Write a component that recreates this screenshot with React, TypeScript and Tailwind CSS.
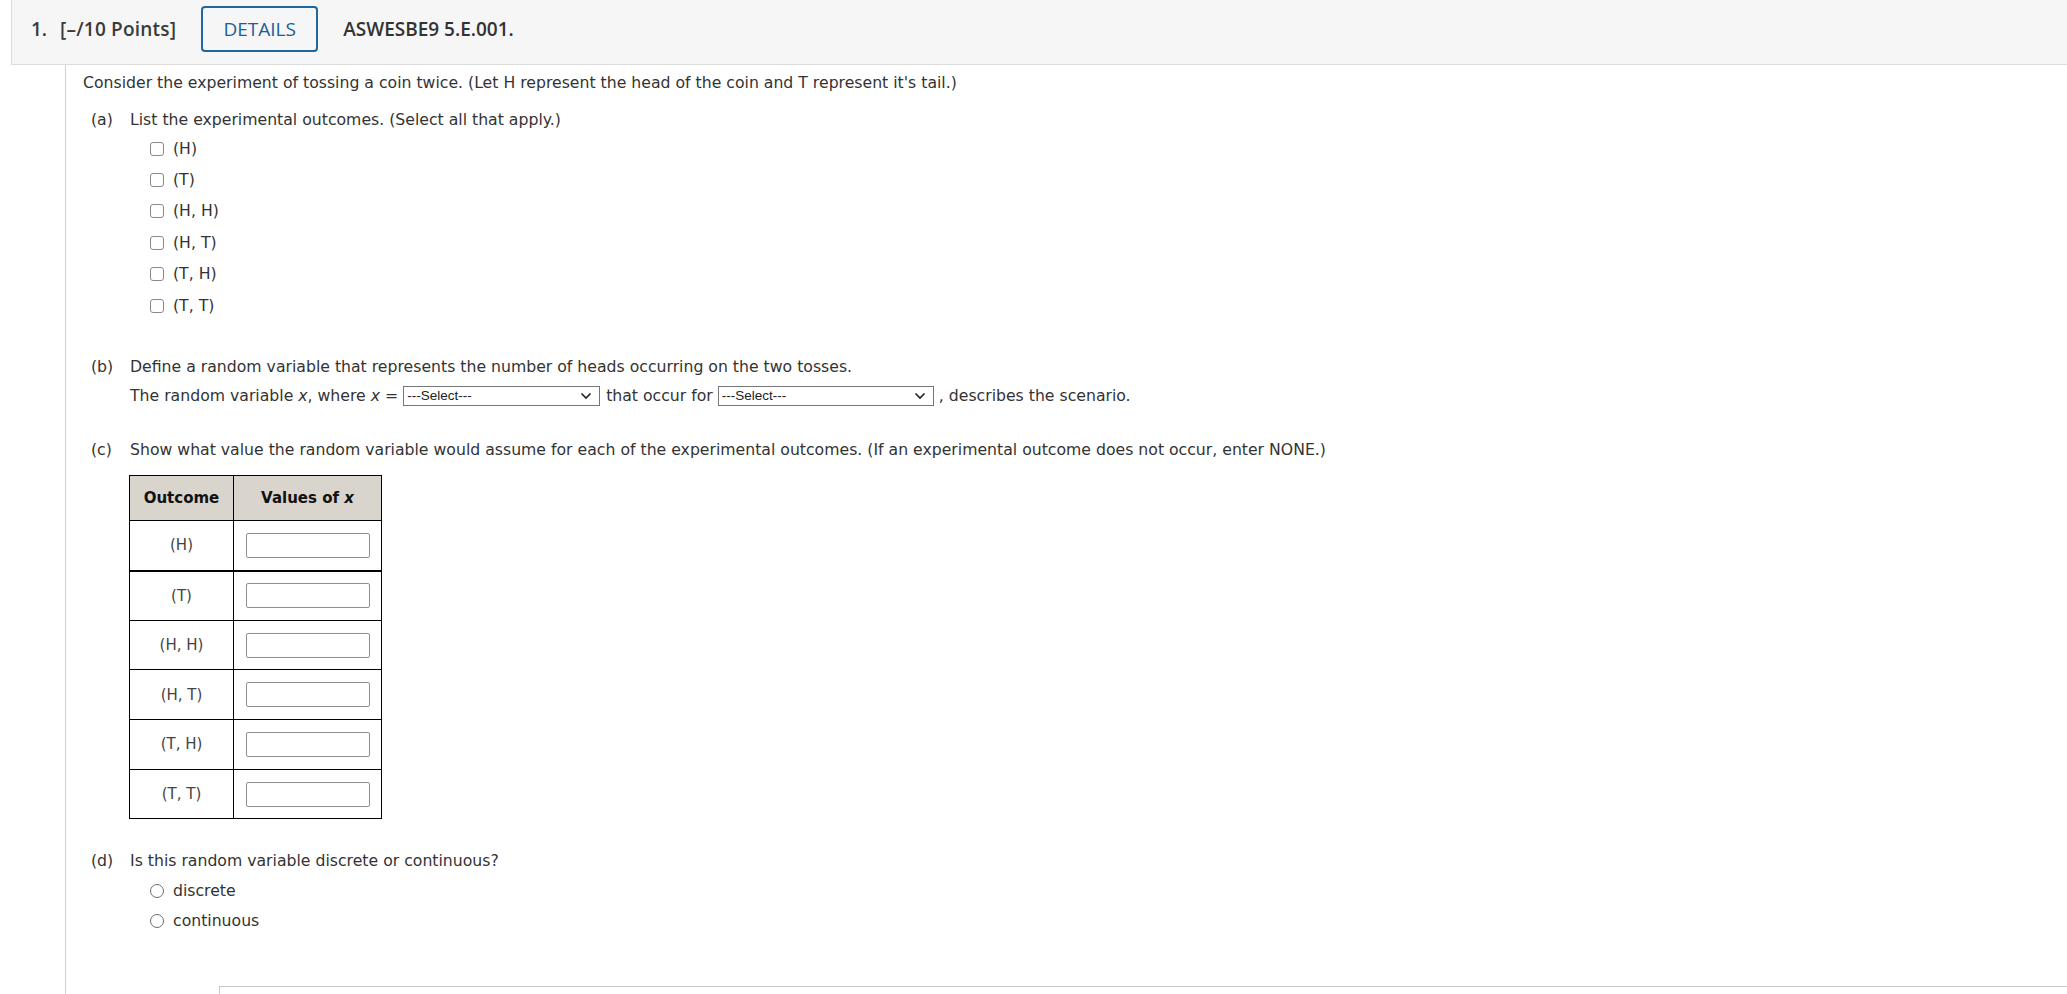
const outcomes = ['(H)', '(T)', '(H, H)', '(H, T)', '(T, H)', '(T, T)']

function Chevron() {
  return (
    <svg width="12" height="8" viewBox="0 0 12 8" className="shrink-0">
      <path d="M1.5 1.5 L6 6 L10.5 1.5" fill="none" stroke="#222" strokeWidth="1.6" />
    </svg>
  )
}

function SelectBox({ className }: { className: string }) {
  return (
    <div
      className={`flex h-[20px] items-center justify-between border border-[#767676] bg-white pl-[3px] pr-[7px] font-['Liberation_Sans',sans-serif] text-[13.5px] text-[#222] ${className}`}
    >
      <span>---Select---</span>
      <Chevron />
    </div>
  )
}

function PartLabel({ tag, children }: { tag: string; children: React.ReactNode }) {
  return (
    <div className="flex h-[20px] items-center pl-[8px]">
      <span className="w-[39px]">{tag}</span>
      <span>{children}</span>
    </div>
  )
}

export default function App() {
  return (
    <div className="min-h-screen bg-white font-['DejaVu_Sans',sans-serif] text-[15.7px] leading-[20px] text-[#333]">
      <div className="ml-[11px] flex h-[65px] items-start border-b border-l border-[#dcdcdc] bg-[#f6f6f6] pl-[19px] pt-[6px] font-['Open_Sans',sans-serif]">
        <div className="flex h-[46px] items-center text-[19px] font-semibold text-[#3a3a3a]">
          <span>1.</span>
          <span className="ml-[13px] tracking-[0.2px]">[–/10 Points]</span>
        </div>
        <div className="ml-[25px] flex h-[46px] w-[117px] items-center justify-center rounded-[4px] border-2 border-[#1f67a0] text-[19px] text-[#18609a]">
          DETAILS
        </div>
        <div className="ml-[25px] flex h-[46px] items-center text-[19px] font-semibold text-[#333]">ASWESBE9 5.E.001.</div>
      </div>

      <div className="ml-[65px] min-h-[929px] border-l border-[#d0d0d0] pl-[17px] pt-[8px]">
        <p className="h-[20px]">
          Consider the experiment of tossing a coin twice. (Let H represent the head of the coin and T represent it's tail.)
        </p>

        <div className="mt-[17px]">
          <PartLabel tag="(a)">List the experimental outcomes. (Select all that apply.)</PartLabel>
          <div className="mt-[3px] pl-[67px]">
            {outcomes.map((o) => (
              <div key={o} className="flex h-[31.4px] items-center">
                <span className="h-[14px] w-[14px] rounded-[3px] border-[1.5px] border-[#8a8a8a] bg-white" />
                <span className="ml-[9px]">{o}</span>
              </div>
            ))}
          </div>
        </div>

        <div className="mt-[36px]">
          <PartLabel tag="(b)">Define a random variable that represents the number of heads occurring on the two tosses.</PartLabel>
          <div className="mt-[9px] flex h-[20px] items-center pl-[47px]">
            <span>
              The random variable <i>x</i>, where <i>x</i> =
            </span>
            <SelectBox className="ml-[5px] w-[197px]" />
            <span className="ml-[6px]">that occur for</span>
            <SelectBox className="ml-[5px] w-[216px]" />
            <span className="ml-[5px]">, describes the scenario.</span>
          </div>
        </div>

        <div className="mt-[34px]">
          <PartLabel tag="(c)">
            Show what value the random variable would assume for each of the experimental outcomes. (If an experimental outcome does not occur, enter NONE.)
          </PartLabel>
          <table className="ml-[46px] mt-[15px] border-collapse border border-black text-[15px]">
            <thead>
              <tr className="h-[45px] bg-[#d9d5cc] text-[#111]">
                <th className="w-[104px] border border-black font-bold">Outcome</th>
                <th className="w-[148px] border border-black font-bold">
                  Values of <i>x</i>
                </th>
              </tr>
            </thead>
            <tbody>
              {outcomes.map((o, i) => (
                <tr key={o} className="h-[49.7px]">
                  <td className={`border border-black text-center text-[#444] ${i === 0 ? 'border-b-2' : ''}`}>{o}</td>
                  <td className={`border border-black ${i === 0 ? 'border-b-2' : ''}`}>
                    <div className="mx-auto h-[25px] w-[124px] rounded-[2px] border border-[#8f8f8f] bg-white" />
                  </td>
                </tr>
              ))}
            </tbody>
          </table>
        </div>

        <div className="mt-[32px]">
          <PartLabel tag="(d)">Is this random variable discrete or continuous?</PartLabel>
          <div className="mt-[4px] pl-[67px]">
            {['discrete', 'continuous'].map((o) => (
              <div key={o} className="flex h-[30.5px] items-center">
                <span className="h-[14px] w-[14px] rounded-full border border-[#6d6d6d] bg-white" />
                <span className="ml-[9px]">{o}</span>
              </div>
            ))}
          </div>
        </div>

        <div className="ml-[136px] mt-[50px] h-[20px] border-l border-t border-[#c8c8c8]" />
      </div>
    </div>
  )
}
